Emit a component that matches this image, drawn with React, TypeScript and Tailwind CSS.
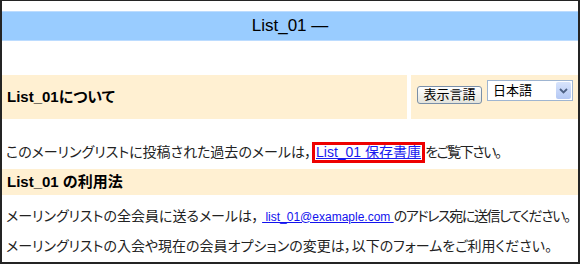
const jp = "font-['Liberation_Sans','Noto_Sans_CJK_JP',sans-serif] [font-feature-settings:'palt']";

function LangButton() {
  return (
    <button className="h-[18px] w-[65px] rounded-[3px] border border-[#7a8fa8] bg-gradient-to-b from-white to-[#e4e4dc] text-[13px] leading-[16px] text-black">
      表示言語
    </button>
  );
}

function LangSelect() {
  return (
    <div className="flex h-[21px] w-[86px] items-center border border-[#9fb5d1] bg-white">
      <span className="flex-1 pl-[5px] text-[13px] leading-[19px] text-black">日本語</span>
      <div className="mr-[1px] flex h-[17px] w-[15px] items-center justify-center rounded-[2px] bg-gradient-to-b from-[#d8e4fc] to-[#b4c8f4]">
        <svg width="9" height="6" viewBox="0 0 9 6">
          <path d="M1 1 L4.5 4.5 L8 1" fill="none" stroke="#4d6185" strokeWidth="1.8" />
        </svg>
      </div>
    </div>
  );
}

export default function App() {
  return (
    <div className={`${jp} h-[264px] w-[580px] overflow-hidden border-x-2 border-t border-b-2 border-[#242424] bg-white text-[#222]`}>
      <div className="h-[10px]" />
      <div className="flex h-[30px] items-center justify-center border-y border-[#bcdcff] bg-[#99ccff] text-[17px] text-black">
        List_01 —
      </div>
      <div className="h-[34px]" />
      <div className="flex h-[44px] gap-[4px]">
        <div className="flex w-[405px] items-center bg-[#fff0d2] pl-[5px] pt-[1px] text-[15px] font-bold text-black">
          List_01について
        </div>
        <div className="flex flex-1 items-start gap-[5px] bg-[#fff0d2] pl-[6px] pt-[5px]">
          <div className="pt-[2px]">
            <LangButton />
          </div>
          <LangSelect />
        </div>
      </div>
      <div className="flex h-[50px] items-start pl-[4px] pt-[23px] text-[14px] leading-[21px]">
        <span>このメーリングリストに投稿された過去のメールは，</span>
        <span className="inline-block h-[21px] border-[3px] border-[#ee0000] bg-white px-[1px] text-[14px] leading-[15px] text-[#1a1aee] underline">
          List_01 保存書庫
        </span>
        <span className="tracking-[-1.5px]">をご覧下さい。</span>
      </div>
      <div className="flex h-[26px] items-center bg-[#fff0d2] pl-[5px] text-[15px] font-bold text-black">
        List_01 の利用法
      </div>
      <div className="flex h-[43px] items-center whitespace-nowrap pl-[4px] text-[14px]">
        <span>メーリングリストの全会員に送るメールは，</span>
        <a href="#" className="ml-[3px] whitespace-pre text-[12px] text-[#1212ee] underline">
          {" list_01@examaple.com "}
        </a>
        <span className="tracking-[-1.4px]">のアドレス宛に送信してください。</span>
      </div>
      <div className="flex h-[16px] items-center whitespace-nowrap pl-[4px] text-[14px]">
        メーリングリストの入会や現在の会員オプションの変更は，以下のフォームをご利用ください。
      </div>
    </div>
  );
}
